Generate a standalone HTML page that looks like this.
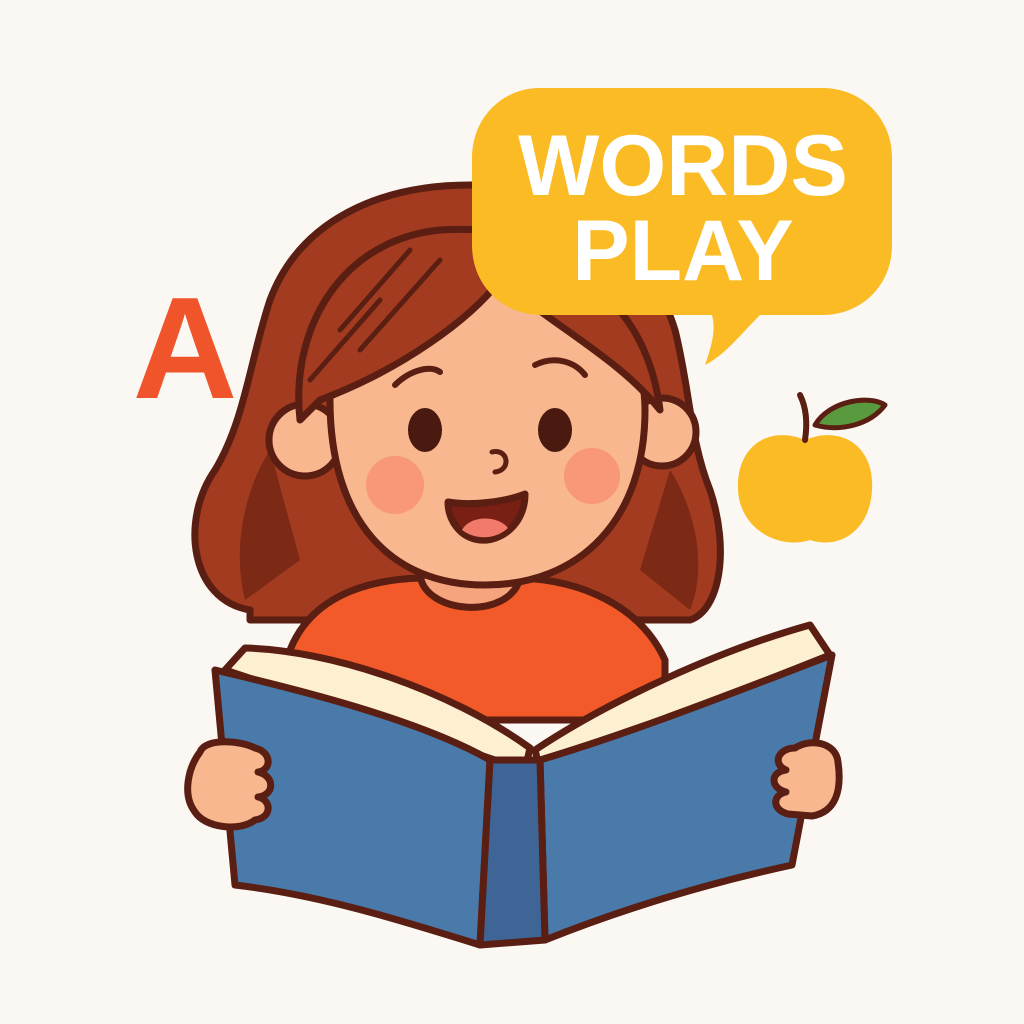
<!DOCTYPE html>
<html><head><meta charset="utf-8"><style>
html,body{margin:0;padding:0;background:#fbf8f4;}
svg{display:block}
</style></head><body>
<svg width="1024" height="1024" viewBox="0 0 1024 1024" xmlns="http://www.w3.org/2000/svg">
<rect width="1024" height="1024" fill="#fbf8f4"/>
<g stroke="#5a1e12" stroke-width="7" stroke-linejoin="round" stroke-linecap="round">
<path d="M250,610 C190,600 180,520 215,470 C245,420 250,360 270,300 C300,220 380,185 470,185 C580,185 650,250 675,330 C690,390 690,440 710,490 C730,550 720,610 690,620 L250,620 Z" fill="#a23b1f"/>
<path d="M245,600 C230,540 250,480 270,450 L300,560 Z" fill="#7c2a16" stroke="none"/>
<path d="M690,610 C710,560 690,500 670,470 L640,570 Z" fill="#7c2a16" stroke="none"/>
<path d="M290,650 C310,600 360,580 420,578 L520,578 C580,580 640,605 665,660 L665,720 L290,720 Z" fill="#f25a2a"/>
<path d="M420,575 C425,615 510,620 520,578 Z" fill="#f5a47e"/>
<circle cx="305" cy="440" r="36" fill="#f8b78f"/>
<circle cx="662" cy="432" r="34" fill="#f8b78f"/>
<path d="M330,400 C330,320 400,290 480,290 C570,290 645,320 645,410 C645,520 580,585 485,585 C390,585 330,520 330,400 Z" fill="#f8b78f"/>
<path d="M300,420 C290,330 340,240 440,230 C520,225 560,250 610,300 C640,330 655,370 660,410 C620,360 560,330 500,280 C470,320 400,370 320,400 Z" fill="#a23b1f"/>
<path d="M340,330 L410,250 M360,350 L440,260 M310,380 L380,300" fill="none" stroke-width="5"/>
<path d="M395,385 C410,370 430,365 440,372" fill="none" stroke-width="6"/>
<path d="M535,365 C555,355 575,362 585,375" fill="none" stroke-width="6"/>
<ellipse cx="425" cy="430" rx="17" ry="22" fill="#4a1a10" stroke="none"/>
<ellipse cx="555" cy="430" rx="17" ry="22" fill="#4a1a10" stroke="none"/>
<circle cx="395" cy="485" r="29" fill="#f8977a" stroke="none"/>
<circle cx="592" cy="476" r="28" fill="#f8977a" stroke="none"/>
<path d="M492,452 C508,448 512,470 495,472" fill="none" stroke-width="5"/>
<path d="M448,502 C470,506 505,502 525,494 C525,525 500,542 480,540 C460,538 448,520 448,502 Z" fill="#7a1f14"/>
<path d="M462,530 C470,515 498,515 508,528 C495,540 475,540 462,530 Z" fill="#f27a6a" stroke="none"/>
<path d="M225,670 L245,648 C330,650 450,690 530,748 L525,770 Z" fill="#fdf0d0"/>
<path d="M535,750 C610,700 720,650 810,625 L830,655 L540,770 Z" fill="#fdf0d0"/>
<path d="M215,670 C300,690 420,720 490,760 L480,945 C400,920 320,895 235,885 Z" fill="#4a7aaa"/>
<path d="M540,760 C640,730 740,690 832,655 L792,865 C700,885 620,910 545,940 Z" fill="#4a7aaa"/>
<path d="M490,760 L540,760 L545,940 L480,945 Z" fill="#3e6595"/>
<!-- hands in front -->
<path d="M200,752 C205,738 240,740 255,748 C272,752 272,770 258,772 C275,776 275,795 258,797 C272,800 272,818 255,820 C240,832 205,828 195,812 C182,795 188,768 200,752 Z" fill="#f8b78f"/>
<path d="M795,748 C810,738 836,742 838,762 C842,790 836,812 812,816 L788,814 C772,810 772,795 786,792 C770,788 770,772 786,770 C772,764 778,748 795,748 Z" fill="#f8b78f"/>
<path d="M540,88 L822,88 C862,88 892,118 892,158 L892,245 C892,285 862,315 822,315 L760,315 C740,335 725,355 705,365 C712,345 716,330 712,315 L542,315 C502,315 472,285 472,245 L472,158 C472,118 502,88 540,88 Z" fill="#fbbb24" stroke="none"/>
<path d="M805,440 C840,425 875,445 872,490 C870,530 840,550 810,540 C780,550 740,530 738,490 C736,445 770,425 805,440 Z" fill="#fbbb24" stroke="none"/>
<path d="M805,440 C808,420 805,405 800,395" fill="none" stroke-width="6"/>
<path d="M815,425 C830,400 870,395 885,405 C870,425 840,432 815,425 Z" fill="#5a9a3e" stroke-width="5"/>
</g>
<text x="683" y="195" text-anchor="middle" font-family="Liberation Sans, sans-serif" font-weight="bold" font-size="86" fill="#fff">WORDS</text>
<text x="683" y="280" text-anchor="middle" font-family="Liberation Sans, sans-serif" font-weight="bold" font-size="86" fill="#fff">PLAY</text>
<text x="185" y="398" text-anchor="middle" font-family="Liberation Sans, sans-serif" font-weight="bold" font-size="145" fill="#f0542a">A</text>
</svg>
</body></html>
